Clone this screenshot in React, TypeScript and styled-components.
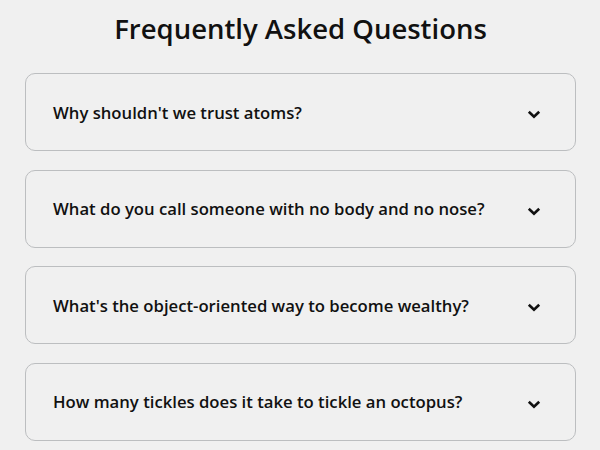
import styled, { createGlobalStyle } from 'styled-components';

const GlobalStyle = createGlobalStyle`
    * {
        box-sizing: border-box;
    }
    body {
        margin: 0;
        background-color: #f0f0f0;
        font-family: 'Open Sans', 'Liberation Sans', sans-serif;
        color: #111;
    }
`;

const Page = styled.div`
    padding: 0 24px 0 25px;
`;

const Title = styled.h1`
    margin: 0;
    height: 73px;
    display: flex;
    align-items: center;
    justify-content: center;
    padding-bottom: 16px;
    font-size: 27.5px;
    font-weight: 600;
`;

const FaqList = styled.div`
    display: flex;
    flex-direction: column;
    gap: 18.5px;
`;

const Faq = styled.div`
    height: 78px;
    border: 1px solid #bcbec0;
    border-radius: 10px;
    padding: 0 34px 0 27px;
    display: flex;
    align-items: center;
    justify-content: space-between;
`;

const Question = styled.h3`
    margin: 0;
    font-size: 16.7px;
    font-weight: 600;
`;

const Toggle = styled.svg`
    width: 14px;
    height: 9px;
    margin-top: 5px;
    flex-shrink: 0;
`;

const questions = [
    "Why shouldn't we trust atoms?",
    'What do you call someone with no body and no nose?',
    "What's the object-oriented way to become wealthy?",
    'How many tickles does it take to tickle an octopus?',
];

function App() {
    return (
        <>
            <GlobalStyle />
            <Page>
                <Title>Frequently Asked Questions</Title>
                <FaqList>
                    {questions.map((q) => (
                        <Faq key={q}>
                            <Question>{q}</Question>
                            <Toggle viewBox="0 0 14 9">
                                <polyline
                                    points="1.8,1.8 7,6.8 12.2,1.8"
                                    fill="none"
                                    stroke="#111"
                                    strokeWidth="2.6"
                                />
                            </Toggle>
                        </Faq>
                    ))}
                </FaqList>
            </Page>
        </>
    );
}
export default App;
